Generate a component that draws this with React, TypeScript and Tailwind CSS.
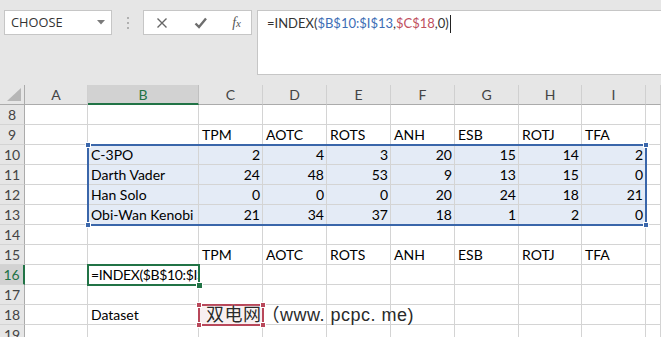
import React from "react";

const COLS = ["A", "B", "C", "D", "E", "F", "G", "H", "I", ""];
const HEADERS = ["TPM", "AOTC", "ROTS", "ANH", "ESB", "ROTJ", "TFA"];
const DATA: [string, number[]][] = [
  ["C-3PO", [2, 4, 3, 20, 15, 14, 2]],
  ["Darth Vader", [24, 48, 53, 9, 13, 15, 0]],
  ["Han Solo", [0, 0, 0, 20, 24, 18, 21]],
  ["Obi-Wan Kenobi", [21, 34, 37, 18, 1, 2, 0]],
];

type Cell = { text?: string; align?: "l" | "r"; sel?: boolean; tight?: boolean };

function buildRows(): { n: number; cells: Cell[] }[] {
  const rows: { n: number; cells: Cell[] }[] = [];
  for (let n = 8; n <= 19; n++) {
    const cells: Cell[] = Array.from({ length: 10 }, () => ({}));
    if (n === 9 || n === 15) {
      HEADERS.forEach((h, i) => (cells[2 + i] = { text: h, align: "l" }));
    }
    if (n >= 10 && n <= 13) {
      const [name, vals] = DATA[n - 10];
      cells[1] = { text: name, align: "l", sel: true };
      vals.forEach((v, i) => (cells[2 + i] = { text: String(v), align: "r", sel: true }));
    }
    if (n === 16) cells[1] = { text: "=INDEX($B$10:$I$13,$C$18,0)", align: "l", tight: true };
    if (n === 18) cells[1] = { text: "Dataset", align: "l" };
    rows.push({ n, cells });
  }
  return rows;
}

const cellFont = "font-['Lato','Noto_Sans',sans-serif] text-[14px]";

export default function App() {
  const rows = buildRows();
  return (
    <div className="w-[661px] h-[337px] overflow-hidden bg-white relative select-none">
      {/* Top formula area */}
      <div className="h-[85px] bg-[#e6e6e6] flex items-start pt-[10px] pl-[4px]">
        <div className="w-[108px] h-[25px] bg-white border border-[#c6c6c6] flex items-center justify-between pl-[6px] pr-[6px]">
          <span className="font-['Open_Sans',sans-serif] text-[12.8px] text-[#333] leading-none">CHOOSE</span>
          <svg width="8" height="5" viewBox="0 0 8 5">
            <path d="M0 0 L8 0 L4 4.5 Z" fill="#7a7a7a" />
          </svg>
        </div>
        <div className="w-[31px] h-[25px] flex flex-col items-center justify-center gap-[3px]">
          <div className="w-[2px] h-[2px] bg-[#b0b0b0]" />
          <div className="w-[2px] h-[2px] bg-[#b0b0b0]" />
          <div className="w-[2px] h-[2px] bg-[#b0b0b0]" />
        </div>
        <div className="w-[109px] h-[25px] bg-white border border-[#c6c6c6] flex items-center justify-between pl-[12px] pr-[10px]">
          <svg width="12" height="12" viewBox="0 0 12 12">
            <path d="M1.5 1.5 L10.5 10.5 M10.5 1.5 L1.5 10.5" stroke="#666" strokeWidth="1.4" />
          </svg>
          <svg width="13" height="12" viewBox="0 0 13 12">
            <path d="M1.5 6.5 L5 10 L12 1.5" stroke="#6e6e6e" strokeWidth="2.4" fill="none" />
          </svg>
          <span className="font-['Liberation_Serif',serif] italic text-[14px] text-[#555] leading-none">
            f<span className="text-[11px]">x</span>
          </span>
        </div>
        <div className="ml-[5px] flex-1 h-[65px] bg-white border border-r-0 border-[#c6c6c6] pl-[9px] pt-[3px]">
          <div className="flex items-center h-[20px] font-['Lato','Noto_Sans',sans-serif] text-[13px] text-[#333] whitespace-nowrap">
            <span>=INDEX(</span>
            <span className="text-[#3d6db5]">$B$10:$I$13</span>
            <span>,</span>
            <span className="text-[#c0505e]">$C$18</span>
            <span>,0)</span>
            <span className="w-[1px] h-[18px] bg-[#222] ml-[1px]" />
          </div>
        </div>
      </div>

      {/* Grid */}
      <div className="relative">
        <div className="grid grid-cols-[25px_63px_111px_64px_64px_64px_64px_64px_63px_64px_1fr]">
          {/* header row */}
          <div className="h-[20px] bg-[#e6e6e6] border-r border-b border-[#ababab] relative">
            <svg className="absolute right-[3px] bottom-[3px]" width="14" height="13" viewBox="0 0 14 13">
              <path d="M14 0 L14 13 L0 13 Z" fill="#b6b6b6" />
            </svg>
          </div>
          {COLS.map((c, i) => (
            <div
              key={"h" + i}
              className={
                "h-[20px] flex items-center justify-center font-['Lato','Noto_Sans',sans-serif] text-[14px] border-r " +
                (c === "B"
                  ? "bg-[#d2d2d2] text-[#217346] border-b-2 border-b-[#217346] border-r-[#c0c0c0]"
                  : "bg-[#e6e6e6] text-[#444] border-b border-b-[#ababab] border-r-[#d0d0d0]")
              }
            >
              {c}
            </div>
          ))}

          {rows.map((r) => (
            <React.Fragment key={r.n}>
              <div
                className={
                  "h-[20px] flex items-center justify-center font-['Lato','Noto_Sans',sans-serif] text-[14px] border-b border-b-[#d4d4d4] " +
                  (r.n === 16
                    ? "bg-[#d2d2d2] text-[#217346] border-r-2 border-r-[#217346]"
                    : "bg-[#e6e6e6] text-[#444] border-r border-r-[#ababab]")
                }
              >
                {r.n}
              </div>
              {r.cells.map((c, i) => (
                <div
                  key={i}
                  className={
                    "h-[20px] border-r border-b border-[#d4d4d4] overflow-hidden whitespace-nowrap leading-[20px] text-black flex " +
                    cellFont +
                    " " +
                    (c.tight ? "tracking-[-0.35px] " : "") +
                    (c.sel ? "bg-[#e4ebf6] " : "bg-white ") +
                    (c.align === "r" ? "justify-end pr-[2px]" : "justify-start pl-[3px]")
                  }
                >
                  {c.text}
                </div>
              ))}
            </React.Fragment>
          ))}
        </div>

        {/* Blue reference range B10:I13 */}
        <div className="absolute left-[87px] top-[59px] w-[560px] h-[82px] border-2 border-[#3a66aa] pointer-events-none" />
        <div className="absolute left-[85px] top-[57px] w-[6px] h-[6px] bg-[#3a66aa] border border-white" />
        <div className="absolute left-[643px] top-[57px] w-[6px] h-[6px] bg-[#3a66aa] border border-white" />
        <div className="absolute left-[85px] top-[137px] w-[6px] h-[6px] bg-[#3a66aa] border border-white" />
        <div className="absolute left-[643px] top-[137px] w-[6px] h-[6px] bg-[#3a66aa] border border-white" />

        {/* Active cell B16 */}
        <div className="absolute left-[87px] top-[179px] w-[113px] h-[22px] border-2 border-[#217346] pointer-events-none" />
        <div className="absolute left-[196px] top-[197px] w-[7px] h-[7px] bg-[#217346] border border-white" />

        {/* Red reference C18 */}
        <div className="absolute left-[198px] top-[219px] w-[66px] h-[22px] border-2 border-[#b8475a] bg-[#f3e4e6]/60 pointer-events-none" />
        <div className="absolute left-[196px] top-[217px] w-[6px] h-[6px] bg-[#b8475a] border border-white" />
        <div className="absolute left-[260px] top-[217px] w-[6px] h-[6px] bg-[#b8475a] border border-white" />
        <div className="absolute left-[196px] top-[237px] w-[6px] h-[6px] bg-[#b8475a] border border-white" />
        <div className="absolute left-[260px] top-[237px] w-[6px] h-[6px] bg-[#b8475a] border border-white" />

        {/* Watermark */}
        <div className="absolute left-[206px] top-[219px] font-['Liberation_Sans','Noto_Sans_CJK_SC',sans-serif] text-[18px] leading-[22px] text-[#2a2a2a] whitespace-nowrap tracking-[0.5px] [text-shadow:0_0_2px_#fff]">
          双电网（www. pcpc. me)
        </div>
      </div>
    </div>
  );
}
